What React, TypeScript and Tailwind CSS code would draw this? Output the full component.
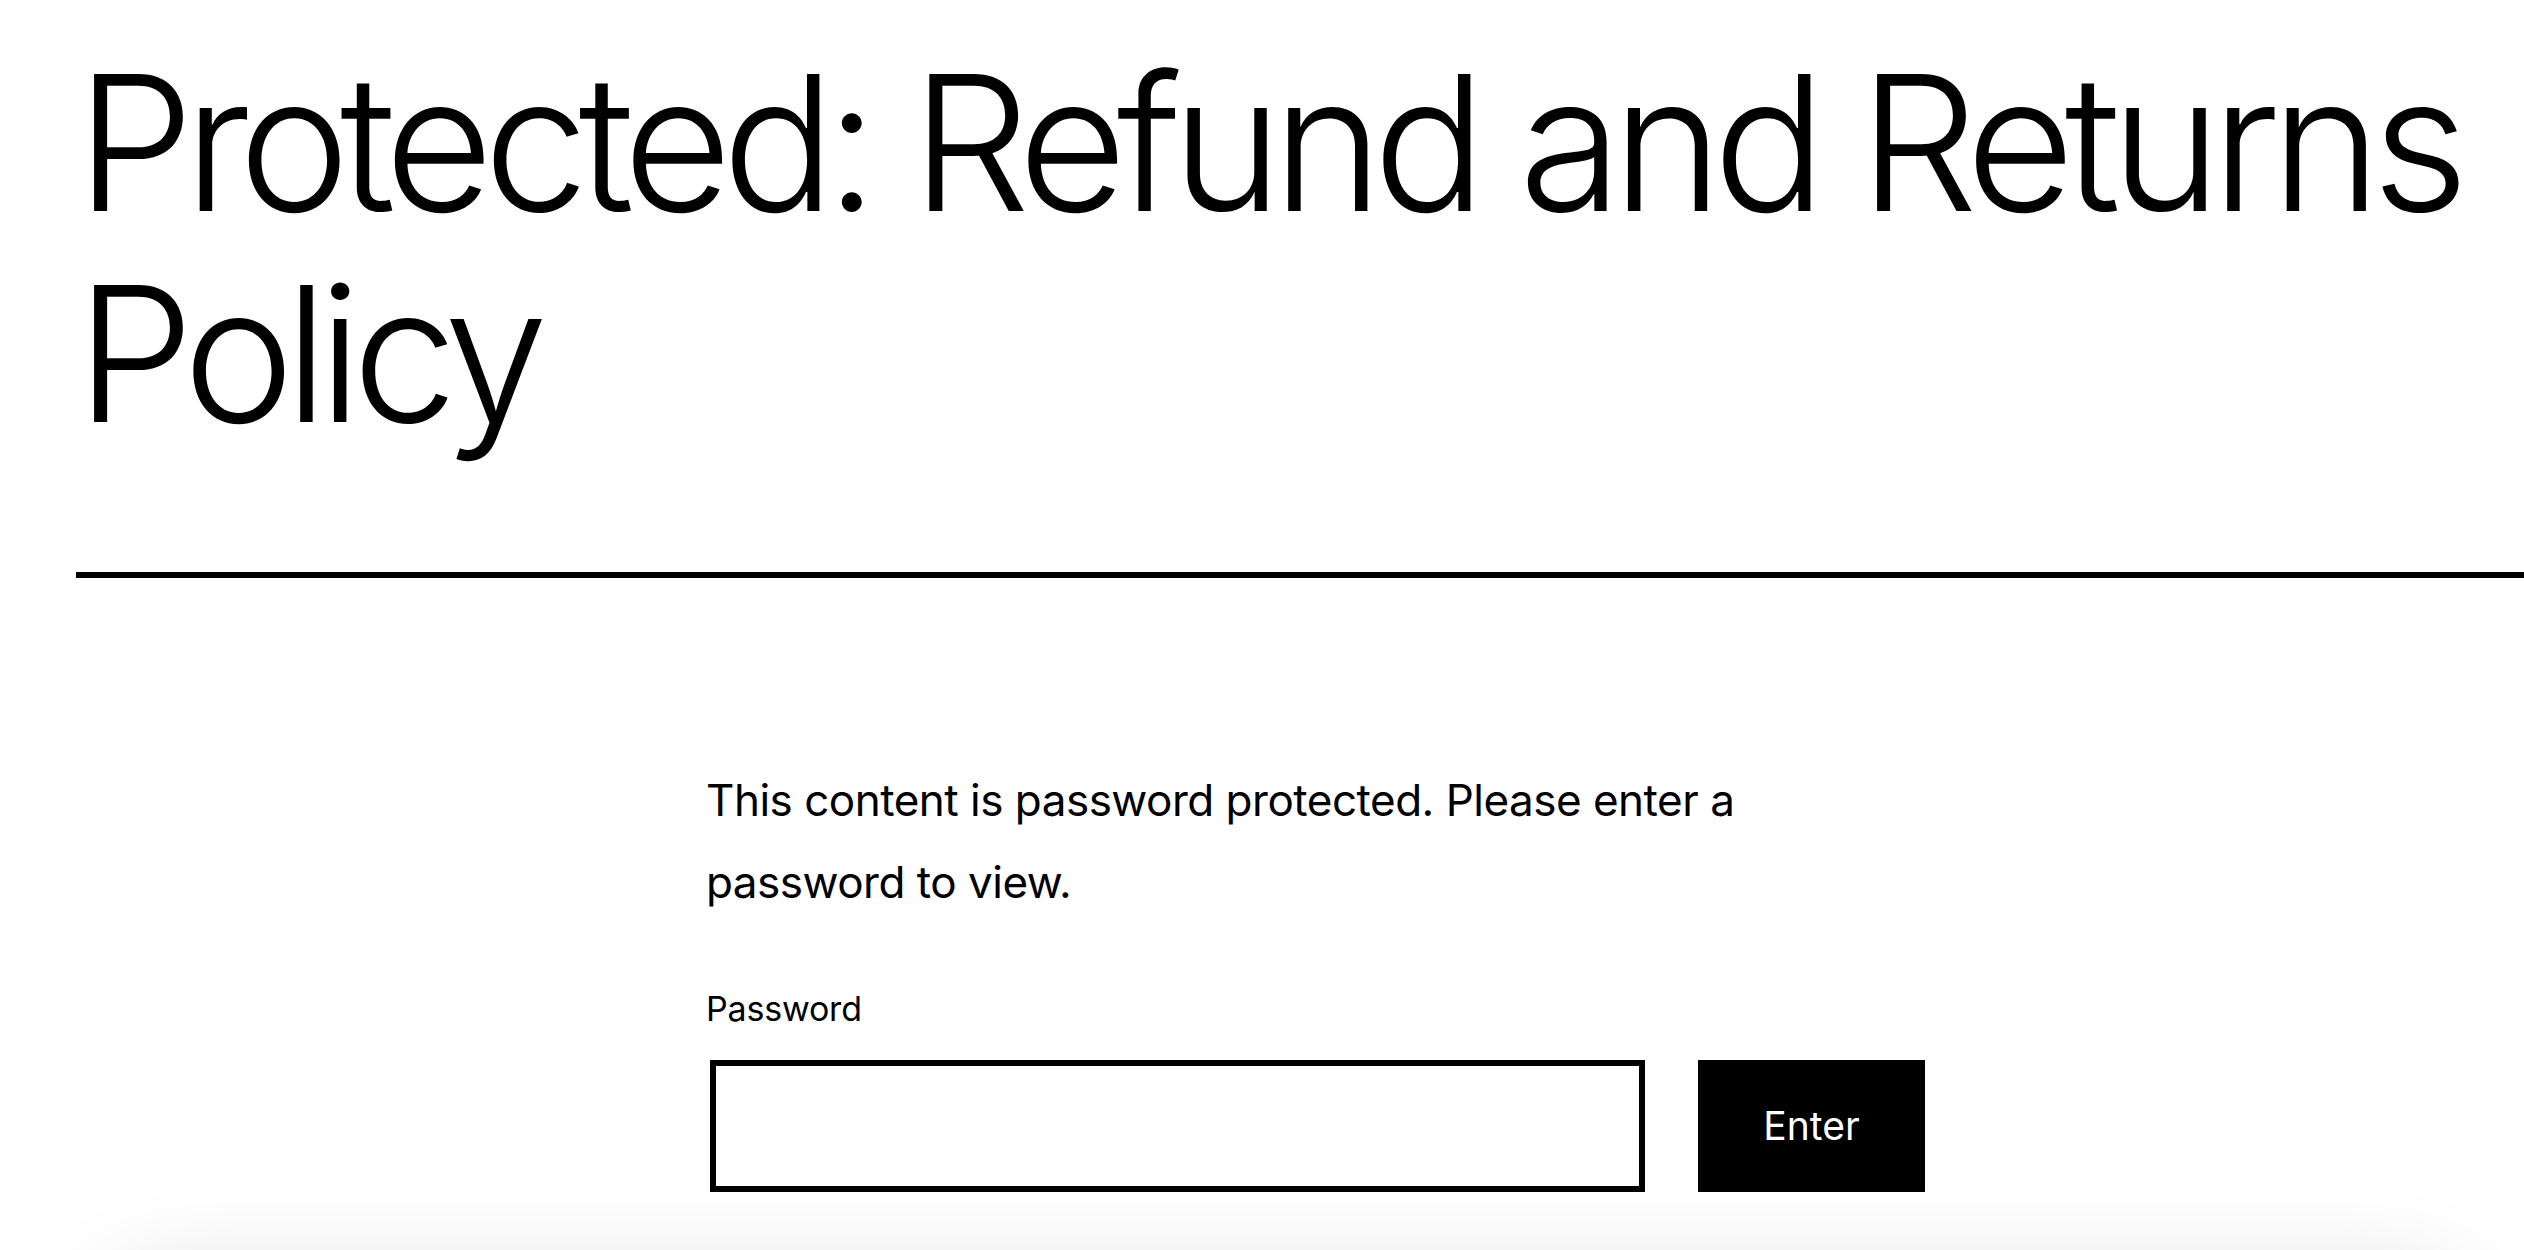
import React from 'react';

export default function App() {
  return (
    <div className="relative min-h-[1250px] overflow-hidden bg-white text-black" style={{ fontFamily: 'Inter, "Noto Sans", sans-serif' }}>
      <header className="pl-[76px] pt-[37px]">
        <h1 className="text-[188px] font-light leading-[211px] tracking-[-10px]">
          Protected: Refund and Returns Policy
        </h1>
        <hr className="mt-[113px] h-[6px] border-0 bg-black" />
      </header>

      <main className="ml-[706px] mt-[181px] w-[1240px]">
        <p className="w-[1080px] text-[44px] leading-[82px] tracking-[-0.5px]">
          This content is password protected. Please enter a password to view.
        </p>

        <form className="mt-[66px]" onSubmit={(e) => e.preventDefault()}>
          <label htmlFor="pwd" className="block text-[34px] leading-[40px] tracking-[-0.2px]">
            Password
          </label>
          <div className="mt-[31px] flex items-stretch gap-[53px]">
            <input
              id="pwd"
              type="password"
              className="ml-[4px] h-[132px] w-[935px] border-[6px] border-black bg-white outline-none"
            />
            <button
              type="submit"
              className="h-[132px] w-[227px] bg-black text-[39px] text-white"
            >
              Enter
            </button>
          </div>
        </form>
      </main>

      {/* shadow of a panel sitting just below the fold */}
      <div className="absolute left-[100px] right-[50px] top-[1285px] h-[200px] rounded-[70px] bg-white shadow-[0_0_100px_rgba(0,0,0,0.18)]" />
    </div>
  );
}
